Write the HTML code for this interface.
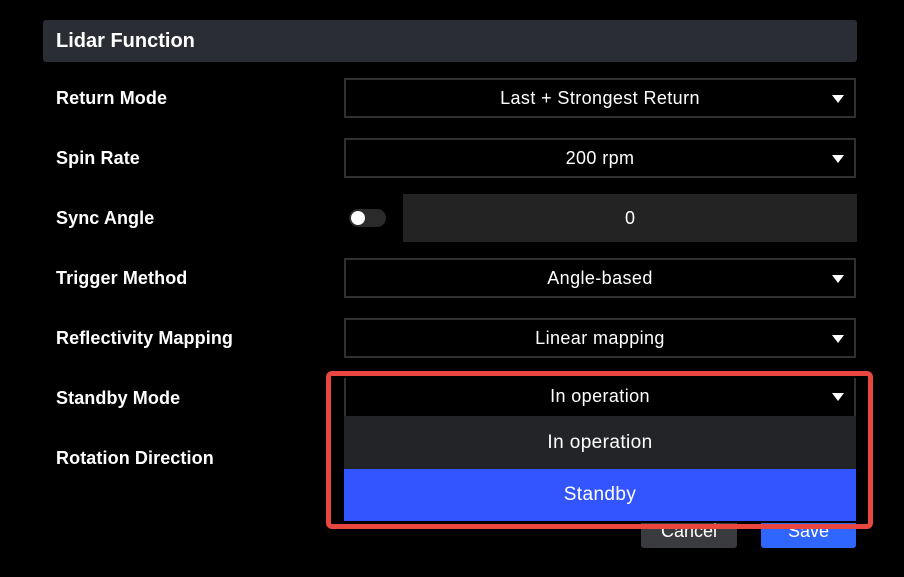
<!DOCTYPE html><html><head><style>
body{margin:0;width:904px;height:577px;background:#000;font-family:"Liberation Sans",Arial,sans-serif;color:#fff;position:relative;overflow:hidden}
.a{position:absolute}
.hdr{left:43px;top:20px;width:814px;height:42px;background:#2a2d33;border-radius:3px;font-weight:bold;font-size:20px;line-height:42px;box-sizing:border-box;padding-left:13px}
.lbl{left:56px;font-weight:bold;font-size:18px;letter-spacing:0.1px}
.sel{left:344px;width:512px;height:40px;border:2px solid #303030;box-sizing:border-box;text-align:center;line-height:36px;font-size:18px;letter-spacing:0.4px}
.sel:after{content:"";position:absolute;right:10px;top:15px;border-left:6px solid transparent;border-right:6px solid transparent;border-top:8px solid #fff}
</style></head><body>
<div class="a hdr">Lidar Function</div>
<div class="a lbl" style="top:88px">Return Mode</div>
<div class="a lbl" style="top:148px">Spin Rate</div>
<div class="a lbl" style="top:208px">Sync Angle</div>
<div class="a lbl" style="top:268px">Trigger Method</div>
<div class="a lbl" style="top:328px">Reflectivity Mapping</div>
<div class="a lbl" style="top:388px">Standby Mode</div>
<div class="a lbl" style="top:448px">Rotation Direction</div>
<div class="a sel" style="top:78px">Last + Strongest Return</div>
<div class="a sel" style="top:138px">200 rpm</div>
<div class="a" style="left:349px;top:209px;width:37px;height:18px;border-radius:9px;background:#2a2a2a"></div>
<div class="a" style="left:351px;top:211px;width:14px;height:14px;border-radius:7px;background:#fff"></div>
<div class="a" style="left:403px;top:194px;width:454px;height:48px;background:#232323;text-align:center;line-height:48px;font-size:18px">0</div>
<div class="a sel" style="top:258px">Angle-based</div>
<div class="a sel" style="top:318px">Linear mapping</div>
<div class="a" style="left:641px;top:515px;width:96px;height:33px;background:#3a3b3e;border-radius:3px;text-align:center;line-height:33px;font-size:18px">Cancel</div>
<div class="a" style="left:761px;top:515px;width:95px;height:33px;background:#2f66ff;border-radius:3px;text-align:center;line-height:33px;font-size:18px">Save</div>
<div class="a" style="left:331px;top:376px;width:537px;height:147px;background:#000"></div>
<div class="a sel" style="top:378px;height:40px;border-top:none">In operation</div>
<div class="a" style="left:344px;top:416px;width:512px;height:53px;background:#232427;text-align:center;line-height:53px;font-size:19px;letter-spacing:0.4px">In operation</div>
<div class="a" style="left:344px;top:469px;width:512px;height:52px;background:#3355ff;text-align:center;line-height:52px;font-size:19px;letter-spacing:0.4px">Standby</div>
<div class="a" style="left:326px;top:371px;width:547px;height:158px;border:5px solid #e8473f;border-radius:6px;box-sizing:border-box"></div>
</body></html>
